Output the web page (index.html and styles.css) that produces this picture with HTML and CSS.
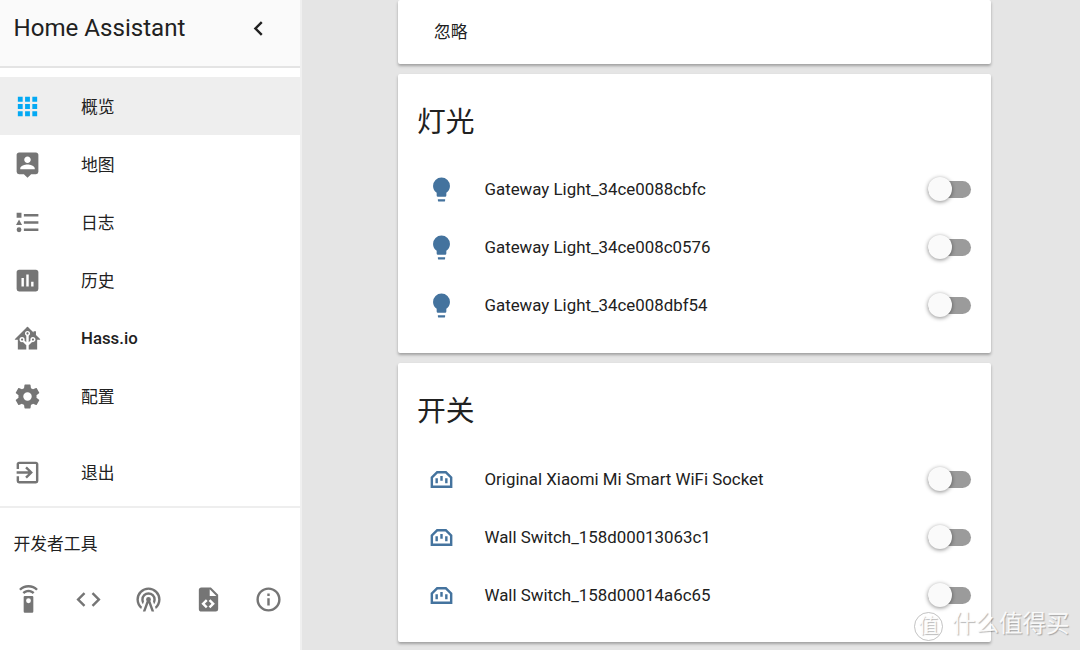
FILE: index.html
```html
<!DOCTYPE html>
<html lang="zh-CN">
<head>
  <meta charset="UTF-8" />
  <title>Home Assistant</title>
  <link rel="stylesheet" href="styles.css">
</head>
<body>
  <svg class="sprite" xmlns="http://www.w3.org/2000/svg">
    <symbol id="bulb" viewBox="0 0 24 24"><path d="M12,2A7,7 0 0,0 5,9C5,11.38 6.19,13.47 8,14.74V17A1,1 0 0,0 9,18H15A1,1 0 0,0 16,17V14.74C17.81,13.47 19,11.38 19,9A7,7 0 0,0 12,2M9,21A1,1 0 0,0 10,22H14A1,1 0 0,0 15,21V20H9V21Z"/></symbol>
    <symbol id="socket" viewBox="0 0 24 24"><path d="M15,15H17V11H15M7,15H9V11H7M11,13H13V9H11M8.83,7H15.2L19,10.8V17H5V10.8M8,5L3,10V19H21V10L16,5H8Z"/></symbol>
  </svg>

  <div class="layout">
    <aside class="sidebar">
      <div class="sidebar-head">
        <span class="app-title">Home Assistant</span>
        <svg class="collapse" viewBox="0 0 24 24"><path d="M15.41,16.58L10.83,12L15.41,7.41L14,6L8,12L14,18L15.41,16.58Z"/></svg>
      </div>

      <nav class="nav">
        <a class="nav-item active">
          <svg class="icon" viewBox="0 0 24 24"><path d="M16,20H20V16H16M16,14H20V10H16M10,8H14V4H10M16,8H20V4H16M10,14H14V10H10M4,14H8V10H4M4,20H8V16H4M10,20H14V16H10M4,8H8V4H4V8Z"/></svg>
          <span>概览</span>
        </a>
        <a class="nav-item">
          <svg class="icon" viewBox="0 0 24 24"><path d="M18,16H6V15.1C6,13.1 10,12 12,12C14,12 18,13.1 18,15.1M12,5.3C13.5,5.3 14.7,6.5 14.7,8C14.7,9.5 13.5,10.7 12,10.7C10.5,10.7 9.3,9.5 9.3,8C9.3,6.5 10.5,5.3 12,5.3M19,2H5C3.89,2 3,2.89 3,4V18A2,2 0 0,0 5,20H9L12,23L15,20H19A2,2 0 0,0 21,18V4C21,2.89 20.1,2 19,2Z"/></svg>
          <span>地图</span>
        </a>
        <a class="nav-item">
          <svg class="icon" viewBox="0 0 24 24"><path d="M5,9.5L7.5,14H2.5L5,9.5M3,4H7V8H3V4M5,20A2,2 0 0,0 7,18A2,2 0 0,0 5,16A2,2 0 0,0 3,18A2,2 0 0,0 5,20M9,5V7H21V5H9M9,19H21V17H9V19M9,13H21V11H9V13Z"/></svg>
          <span>日志</span>
        </a>
        <a class="nav-item">
          <svg class="icon" viewBox="0 0 24 24"><path d="M17,17H15V13H17M13,17H11V7H13M9,17H7V10H9M19,3H5C3.89,3 3,3.89 3,5V19A2,2 0 0,0 5,21H19A2,2 0 0,0 21,19V5C21,3.89 20.1,3 19,3Z"/></svg>
          <span>历史</span>
        </a>
        <a class="nav-item strong">
          <svg class="icon" viewBox="0 0 24 24"><path d="M21.8,13H20V21H13V17.67L15.79,14.88L16.5,15C17.66,15 18.6,14.06 18.6,12.9C18.6,11.74 17.66,10.8 16.5,10.8A2.1,2.1 0 0,0 14.4,12.9L14.5,13.61L13,15.13V9.65C13.66,9.29 14.1,8.6 14.1,7.8A2.1,2.1 0 0,0 12,5.7A2.1,2.1 0 0,0 9.9,7.8C9.9,8.6 10.34,9.29 11,9.65V15.13L9.5,13.61L9.6,12.9A2.1,2.1 0 0,0 7.5,10.8A2.1,2.1 0 0,0 5.4,12.9A2.1,2.1 0 0,0 7.5,15L8.21,14.88L11,17.67V21H4V13H2.25C1.83,13 1.42,13 1.42,12.79C1.43,12.57 1.85,12.15 2.28,11.72L11,3C11.33,2.67 11.67,2.33 12,2.33C12.33,2.33 12.67,2.67 13,3L17,7V6H19V9L21.78,11.78C22.18,12.18 22.59,12.59 22.6,12.8C22.6,13 22.2,13 21.8,13M7.5,12A0.9,0.9 0 0,1 8.4,12.9A0.9,0.9 0 0,1 7.5,13.8A0.9,0.9 0 0,1 6.6,12.9A0.9,0.9 0 0,1 7.5,12M16.5,12C17,12 17.4,12.4 17.4,12.9C17.4,13.4 17,13.8 16.5,13.8A0.9,0.9 0 0,1 15.6,12.9A0.9,0.9 0 0,1 16.5,12M12,6.9C12.5,6.9 12.9,7.3 12.9,7.8C12.9,8.3 12.5,8.7 12,8.7C11.5,8.7 11.1,8.3 11.1,7.8C11.1,7.3 11.5,6.9 12,6.9Z"/></svg>
          <span>Hass.io</span>
        </a>
        <a class="nav-item">
          <svg class="icon" viewBox="0 0 24 24"><path d="M12,15.5A3.5,3.5 0 0,1 8.5,12A3.5,3.5 0 0,1 12,8.5A3.5,3.5 0 0,1 15.5,12A3.5,3.5 0 0,1 12,15.5M19.43,12.97C19.47,12.65 19.5,12.33 19.5,12C19.5,11.67 19.47,11.34 19.43,11L21.54,9.37C21.73,9.22 21.78,8.95 21.66,8.73L19.66,5.27C19.54,5.05 19.27,4.96 19.05,5.05L16.56,6.05C16.04,5.66 15.5,5.32 14.87,5.07L14.5,2.42C14.46,2.18 14.25,2 14,2H10C9.75,2 9.54,2.18 9.5,2.42L9.13,5.07C8.5,5.32 7.96,5.66 7.44,6.05L4.95,5.05C4.73,4.96 4.46,5.05 4.34,5.27L2.34,8.73C2.21,8.95 2.27,9.22 2.46,9.37L4.57,11C4.53,11.34 4.5,11.67 4.5,12C4.5,12.33 4.53,12.65 4.57,12.97L2.46,14.63C2.27,14.78 2.21,15.05 2.34,15.27L4.34,18.73C4.46,18.95 4.73,19.03 4.95,18.95L7.44,17.94C7.96,18.34 8.5,18.68 9.13,18.93L9.5,21.58C9.54,21.82 9.75,22 10,22H14C14.25,22 14.46,21.82 14.5,21.58L14.87,18.93C15.5,18.67 16.04,18.34 16.56,17.94L19.05,18.95C19.27,19.03 19.54,18.95 19.66,18.73L21.66,15.27C21.78,15.05 21.73,14.78 21.54,14.63L19.43,12.97Z"/></svg>
          <span>配置</span>
        </a>
        <a class="nav-item logout">
          <svg class="icon" viewBox="0 0 24 24"><path d="M19,3H5C3.89,3 3,3.89 3,5V9H5V5H19V19H5V15H3V19A2,2 0 0,0 5,21H19A2,2 0 0,0 21,19V5C21,3.89 20.1,3 19,3M10.08,15.58L11.5,17L16.5,12L11.5,7L10.08,8.41L12.67,11H3V13H12.67L10.08,15.58Z"/></svg>
          <span>退出</span>
        </a>
      </nav>

      <div class="dev">
        <div class="dev-title">开发者工具</div>
        <div class="dev-icons">
          <svg class="icon" viewBox="0 0 24 24"><path d="M12,0C8.96,0 6.21,1.23 4.22,3.22L5.63,4.63C7.26,3 9.5,2 12,2C14.5,2 16.74,3 18.36,4.64L19.77,3.23C17.79,1.23 15.04,0 12,0M7.05,6.05L8.46,7.46C9.37,6.56 10.62,6 12,6C13.38,6 14.63,6.56 15.54,7.46L16.95,6.05C15.68,4.78 13.93,4 12,4C10.07,4 8.32,4.78 7.05,6.05M12,15A2,2 0 0,1 10,13A2,2 0 0,1 12,11A2,2 0 0,1 14,13A2,2 0 0,1 12,15M15,9H9A1,1 0 0,0 8,10V22A1,1 0 0,0 9,23H15A1,1 0 0,0 16,22V10A1,1 0 0,0 15,9Z"/></svg>
          <svg class="icon" viewBox="0 0 24 24"><path d="M14.6,16.6L19.2,12L14.6,7.4L16,6L22,12L16,18L14.6,16.6M9.4,16.6L4.8,12L9.4,7.4L8,6L2,12L8,18L9.4,16.6Z"/></svg>
          <svg class="icon" viewBox="0 0 24 24"><path d="M12,10A2,2 0 0,1 14,12C14,12.5 13.82,12.94 13.53,13.29L16.7,22H14.57L12,14.93L9.43,22H7.3L10.47,13.29C10.18,12.94 10,12.5 10,12A2,2 0 0,1 12,10M12,8A4,4 0 0,0 8,12C8,12.5 8.1,13 8.28,13.46L7.4,15.86C6.53,14.81 6,13.47 6,12A6,6 0 0,1 12,6A6,6 0 0,1 18,12C18,13.47 17.47,14.81 16.6,15.86L15.72,13.46C15.9,13 16,12.5 16,12A4,4 0 0,0 12,8M12,4A8,8 0 0,0 4,12C4,14.36 5,16.5 6.64,17.94L5.92,19.94C3.54,18.11 2,15.23 2,12A10,10 0 0,1 12,2A10,10 0 0,1 22,12C22,15.23 20.46,18.11 18.08,19.94L17.36,17.94C19,16.5 20,14.36 20,12A8,8 0 0,0 12,4Z"/></svg>
          <svg class="icon" viewBox="0 0 24 24"><path d="M13,9H18.5L13,3.5V9M6,2H14L20,8V20A2,2 0 0,1 18,22H6C4.89,22 4,21.1 4,20V4C4,2.89 4.89,2 6,2M6.12,15.5L9.86,19.24L11.28,17.83L8.95,15.5L11.28,13.17L9.86,11.76L6.12,15.5M17.28,15.5L13.54,11.76L12.12,13.17L14.45,15.5L12.12,17.83L13.54,19.24L17.28,15.5Z"/></svg>
          <svg class="icon" viewBox="0 0 24 24"><path d="M11,9H13V7H11M12,20C7.59,20 4,16.41 4,12C4,7.59 7.59,4 12,4C16.41,4 20,7.59 20,12C20,16.41 16.41,20 12,20M12,2A10,10 0 0,0 2,12A10,10 0 0,0 12,22A10,10 0 0,0 22,12A10,10 0 0,0 12,2M11,17H13V11H11V17Z"/></svg>
        </div>
      </div>
    </aside>

    <main class="main">
      <section class="card card-top">
        <span>忽略</span>
      </section>

      <section class="card card-lights">
        <h2>灯光</h2>
        <div class="row">
          <svg class="row-icon"><use href="#bulb"/></svg>
          <span class="row-name">Gateway Light_34ce0088cbfc</span>
          <span class="toggle"></span>
        </div>
        <div class="row">
          <svg class="row-icon"><use href="#bulb"/></svg>
          <span class="row-name">Gateway Light_34ce008c0576</span>
          <span class="toggle"></span>
        </div>
        <div class="row">
          <svg class="row-icon"><use href="#bulb"/></svg>
          <span class="row-name">Gateway Light_34ce008dbf54</span>
          <span class="toggle"></span>
        </div>
      </section>

      <section class="card">
        <h2>开关</h2>
        <div class="row">
          <svg class="row-icon"><use href="#socket"/></svg>
          <span class="row-name">Original Xiaomi Mi Smart WiFi Socket</span>
          <span class="toggle"></span>
        </div>
        <div class="row">
          <svg class="row-icon"><use href="#socket"/></svg>
          <span class="row-name">Wall Switch_158d00013063c1</span>
          <span class="toggle"></span>
        </div>
        <div class="row">
          <svg class="row-icon"><use href="#socket"/></svg>
          <span class="row-name">Wall Switch_158d00014a6c65</span>
          <span class="toggle"></span>
        </div>
      </section>
    </main>
  </div>

  <div class="watermark">
    <span class="wm-badge">值</span>
    <span class="wm-text">什么值得买</span>
  </div>
</body>
</html>
```

FILE: styles.css
```css
html, body {
  margin: 0;
  height: 100%;
  overflow: hidden;
}
body {
  font-family: Roboto, "Noto Sans CJK SC", sans-serif;
  background: #e5e5e5;
  color: #212121;
}
.sprite {
  display: none;
}
.layout {
  display: flex;
  height: 650px;
}

/* sidebar */
.sidebar {
  width: 300px;
  border-right: 2px solid #f0f0f0;
  background: #fff;
  flex-shrink: 0;
}
.sidebar-head {
  height: 56px;
  display: flex;
  align-items: center;
  justify-content: space-between;
  padding: 0 27.5px 10px 13.5px;
  background: #fafafa;
  border-bottom: 2px solid #e4e4e4;
}
.app-title {
  font-size: 24.1px;
}
.collapse {
  width: 29px;
  height: 29px;
  fill: #212121;
}
.nav {
  padding-top: 9px;
}
.nav-item {
  height: 58px;
  display: flex;
  align-items: center;
  font-size: 16.8px;
}
.nav-item span {
  margin-top: -1px;
}
.nav-item.active {
  background: #eeeeee;
}
.nav-item.active .icon {
  fill: #03a9f4;
}
.nav-item.strong {
  font-weight: 500;
}
.nav-item.logout {
  margin-top: 18px;
}
.icon {
  width: 29px;
  height: 29px;
  fill: #757575;
  flex-shrink: 0;
}
.nav-item .icon {
  margin: 0 39px 0 13px;
}
.dev {
  margin-top: 5px;
  border-top: 2px solid #eeeeee;
}
.dev-title {
  font-size: 16.8px;
  padding: 24px 0 0 13.5px;
  line-height: 24px;
}
.dev-icons {
  display: flex;
  justify-content: space-between;
  padding: 29px 19px 0 13.5px;
  gap: 31px;
}

/* cards */
.main {
  flex: 1;
  padding-left: 96px;
}
.card {
  width: 593px;
  height: 279px;
  margin-bottom: 10px;
  background: #fff;
  border-radius: 2px;
  box-shadow: 0 2px 3px rgba(0,0,0,0.3);
}
.card-top {
  height: 64px;
  font-size: 16.8px;
  line-height: 64px;
  padding-left: 36px;
  width: 557px;
}
h2 {
  margin: 0;
  height: 87px;
  line-height: 96px;
  padding-left: 19px;
  font-size: 28.8px;
  font-weight: 400;
}
.card-lights h2 {
  height: 86px;
}
.row {
  height: 58px;
  display: flex;
  align-items: center;
  padding: 0 20px 0 29px;
}
.row-icon {
  width: 29px;
  height: 29px;
  fill: #44739e;
  flex-shrink: 0;
}
.row-name {
  flex: 1;
  margin-left: 28.5px;
  font-size: 16.86px;
}
.toggle {
  position: relative;
  width: 43px;
  height: 17px;
  border-radius: 9px;
  background: #9b9b9b;
}
.toggle::after {
  content: "";
  position: absolute;
  left: -0.5px;
  top: -4px;
  width: 24px;
  height: 24px;
  border-radius: 50%;
  background: #fafafa;
  box-shadow: 0 1px 4px rgba(0,0,0,0.45);
}

/* watermark over the corner */
.watermark {
  position: absolute;
  left: 914px;
  top: 609px;
  display: flex;
  align-items: flex-start;
  gap: 9px;
  color: rgba(255,255,255,0.9);
  text-shadow: 1px 1px 1px rgba(0,0,0,0.28);
}
.wm-badge {
  width: 27px;
  height: 27px;
  margin-top: 3px;
  border-radius: 50%;
  border: 1px solid rgba(170,170,170,0.7);
  font-size: 20px;
  line-height: 26px;
  text-align: center;
}
.wm-text {
  font-size: 23.5px;
  line-height: 30px;
}
```
